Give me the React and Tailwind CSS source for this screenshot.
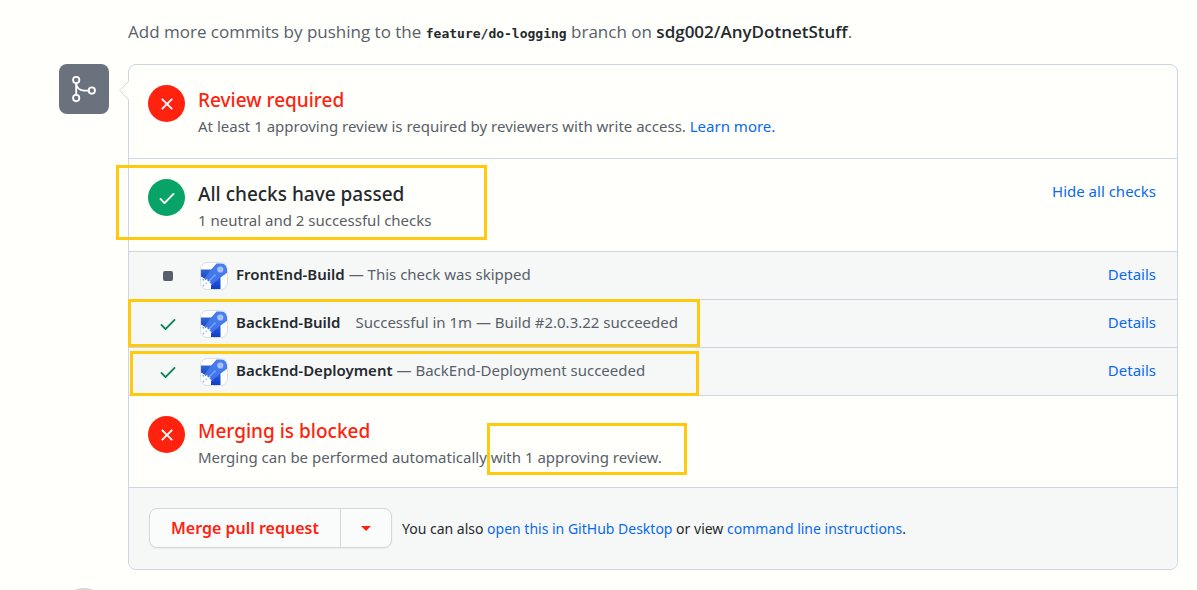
import React from "react";
import { GoGitMerge } from "react-icons/go";

const CHECK_PATH =
  "M13.78 4.22a.75.75 0 0 1 0 1.06l-7.25 7.25a.75.75 0 0 1-1.06 0L2.22 9.28a.75.75 0 0 1 1.06-1.06L6 10.94l6.72-6.72a.75.75 0 0 1 1.06 0Z";
const CROSS_PATH =
  "M3.72 3.72a.75.75 0 0 1 1.06 0L8 6.94l3.22-3.22a.75.75 0 1 1 1.06 1.06L9.06 8l3.22 3.22a.75.75 0 1 1-1.06 1.06L8 9.06l-3.22 3.22a.75.75 0 0 1-1.06-1.06L6.94 8 3.72 4.78a.75.75 0 0 1 0-1.06Z";

function Glyph({ d, className }) {
  return (
    <svg viewBox="0 0 16 16" className={className} fill="currentColor" aria-hidden="true">
      <path d={d} />
    </svg>
  );
}

function StatusBadge({ ok }) {
  return (
    <span
      className={`flex size-[37px] shrink-0 items-center justify-center rounded-full text-white ${
        ok ? "bg-[#08a366]" : "bg-[#ff220f]"
      }`}
    >
      <Glyph d={ok ? CHECK_PATH : CROSS_PATH} className="size-5" />
    </span>
  );
}

function PipelinesLogo() {
  return (
    <svg viewBox="0 0 28 28" className="size-7 shrink-0" aria-hidden="true">
      <defs>
        <linearGradient id="wing" x1="0" y1="0" x2="0" y2="1">
          <stop offset="0" stopColor="#3367dc" />
          <stop offset="1" stopColor="#1a44b8" />
        </linearGradient>
        <linearGradient id="tail" x1="0" y1="0" x2="0" y2="1">
          <stop offset="0" stopColor="#2f63e4" />
          <stop offset="1" stopColor="#0f3ec6" />
        </linearGradient>
        <linearGradient id="body" x1="1" y1="0" x2="0" y2="1">
          <stop offset="0" stopColor="#4d80ee" />
          <stop offset="1" stopColor="#3c72e8" />
        </linearGradient>
        <clipPath id="tile">
          <rect x="1" y="1" width="26" height="26" rx="6" />
        </clipPath>
      </defs>
      <rect x="1" y="1" width="26" height="26" rx="6.5" fill="#fff" />
      <g clipPath="url(#tile)">
        <path d="M1 7.5h12L6.5 18 1 15z" fill="url(#wing)" />
        <path d="M11 20.5 20.5 13.5V27H11z" fill="url(#tail)" />
        <path d="M16.500 1.500H24l3 3v6.500L20.500 15.500 12 22.500 4 17l5-7z" fill="url(#body)" />
        <path d="M9 19 15.500 12.500" stroke="#7ba2f7" strokeWidth="1.500" />
        <circle cx="20.300" cy="7.500" r="3.100" fill="#a6c1fb" />
        <path
          d="M1 14.500l3.500 2 1 2 1.500-2 .800 3 2.700-.500-1 2.500 2.500 1-2 1.500.500 3H1z"
          fill="#fff"
        />
        <path d="m2 16.500 2.500 1-1.500 2zM5 21l2-.500-.500 2zM2.500 22.500l2 .500-1 2z" fill="#8fb0f9" />
      </g>
      <rect x="0.500" y="0.500" width="27" height="27" rx="7" fill="none" stroke="#dcdfe1" />
    </svg>
  );
}

function Link({ children }) {
  return (
    <a href="#" className="text-[#0a69ee] hover:underline">
      {children}
    </a>
  );
}

function Highlight({ className }) {
  return (
    <span aria-hidden="true" className={`pointer-events-none absolute z-10 border-3 border-[#ffc90e] ${className}`} />
  );
}

function Status({ ok, title, children, action, mark, className = "" }) {
  return (
    <section className={`relative flex items-start gap-[13px] pt-5 pr-[21px] pl-[19px] ${className}`}>
      <StatusBadge ok={ok} />
      <div className="min-w-0 flex-1">
        <h2 className={`text-[19px] leading-[31px] font-medium ${ok ? "text-[#24292e]" : "text-[#ff220f]"}`}>
          {title}
        </h2>
        <p className="text-[15px] leading-5 text-[#586069]">{children}</p>
      </div>
      {action}
      {mark}
    </section>
  );
}

const checks = [
  { name: "FrontEnd-Build", state: "skipped", detail: "— This check was skipped" },
  {
    name: "BackEnd-Build",
    state: "passed",
    detail: "Successful in 1m — Build #2.0.3.22 succeeded",
    wide: true,
    mark: "-left-px -top-px h-12 w-[572px]",
  },
  {
    name: "BackEnd-Deployment",
    state: "passed",
    detail: "— BackEnd-Deployment succeeded",
    mark: "left-px top-[3px] h-[45px] w-[569px]",
  },
];

function CheckRow({ check }) {
  return (
    <li className="relative flex h-12 items-center border-t border-[#cdd5de] pr-[21px] pl-7 text-[15px]">
      <span className="flex w-[43px] justify-start pl-px">
        {check.state === "passed" ? (
          <Glyph d={CHECK_PATH} className="size-5 text-[#0b8457]" />
        ) : (
          <span className="ml-[5px] size-[10px] rounded-xs bg-[#57606a]" />
        )}
      </span>
      <PipelinesLogo />
      <div className="flex min-w-0 flex-1 items-baseline justify-between pb-[3px] pl-2">
        <p className="text-[#586069]">
          <strong className={`font-semibold text-[#24292e] ${check.wide ? "mr-[15px]" : "mr-1"}`}>{check.name}</strong>
          {check.detail}
        </p>
        <Link>Details</Link>
      </div>
      {check.mark && <Highlight className={check.mark} />}
    </li>
  );
}

export default function App() {
  return (
    <main className="h-screen overflow-hidden bg-[#fffffb] pr-[19px] pl-[59px] font-['Noto_Sans',sans-serif] text-[#24292e]">
      <p className="pt-5 pl-[69px] font-['Open_Sans',sans-serif] text-[17px] leading-6 text-[#586069]">
        Add more commits by pushing to the{" "}
        <code className="font-['DejaVu_Sans_Mono',monospace] text-[13px] leading-none font-bold text-[#24292e]">
          feature/do-logging
        </code>{" "}
        branch on <strong className="font-semibold text-[#24292e]">sdg002/AnyDotnetStuff</strong>.
      </p>

      <div className="mt-5 flex items-start gap-[19px]">
        <span className="flex size-[50px] shrink-0 items-center justify-center rounded-lg bg-[#6a737d] text-white">
          <GoGitMerge className="size-[30px]" />
        </span>

        <div className="relative min-w-0 flex-1 rounded-lg border border-[#cdd5de]">
          <svg viewBox="0 0 10 20" className="absolute top-4 -left-[10px] h-5 w-[10px]" aria-hidden="true">
            <path d="M10 0 .5 9.500 10 19z" fill="#fffffb" />
            <path d="M9.500.5.700 9.500l8.800 9" fill="none" stroke="#cdd5de" />
          </svg>

          <Status title="Review required" className="h-[93px]">
            At least 1 approving review is required by reviewers with write access. <Link>Learn more.</Link>
          </Status>

          <Status
            ok
            title="All checks have passed"
            className="h-[93px] border-t border-[#cdd5de]"
            action={
              <button type="button" className="text-[15px] leading-6 text-[#0a69ee]">
                Hide all checks
              </button>
            }
            mark={<Highlight className="top-[6px] -left-[13px] h-[75px] w-[371px]" />}
          >
            1 neutral and 2 successful checks
          </Status>

          <ul className="bg-[#f6f8f8]">
            {checks.map((check) => (
              <CheckRow key={check.name} check={check} />
            ))}
          </ul>

          <Status
            title="Merging is blocked"
            className="h-[92px] border-t border-[#cdd5de]"
            mark={<Highlight className="top-[27px] left-[358px] h-[52px] w-[200px]" />}
          >
            Merging can be performed automatically with 1 approving review.
          </Status>

          <footer className="flex items-center gap-[10px] rounded-b-lg border-t border-[#cdd5de] bg-[#f6f8f8] px-5 pt-5 pb-[21px]">
            <div className="flex h-10 shrink-0 overflow-hidden rounded-lg border border-[#d5d8da] bg-[#fafbfb] text-[#ff220f] shadow-xs">
              <button type="button" className="px-[21px] text-[16px] font-semibold">
                Merge pull request
              </button>
              <button
                type="button"
                aria-label="Select merge method"
                className="flex w-[51px] items-center justify-center border-l border-[#d5d8da]"
              >
                <svg viewBox="0 0 10 5" className="h-[5px] w-[10px]" fill="currentColor" aria-hidden="true">
                  <path d="M0 0h10L5 5z" />
                </svg>
              </button>
            </div>
            <p className="text-[14px]">
              You can also <Link>open this in GitHub Desktop</Link> or view <Link>command line instructions</Link>.
            </p>
          </footer>
        </div>
      </div>

      <span className="mt-[18px] block size-[50px] rounded-full bg-[#d3d5d6]" />
    </main>
  );
}
